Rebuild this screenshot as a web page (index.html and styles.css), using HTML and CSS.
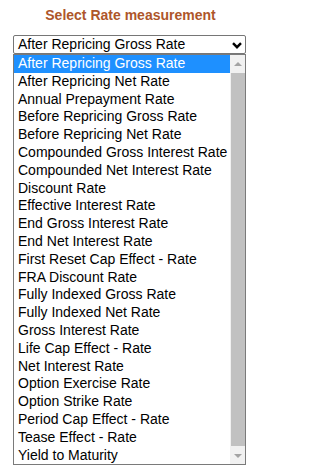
FILE: index.html
```html
<!DOCTYPE html>
<html>
<head>
<meta charset="utf-8">
<link rel="stylesheet" href="styles.css">
</head>
<body>
<div class="page">
<div class="title">Select Rate measurement</div>
<div class="picker">
  <div class="select">
    <span class="select-value">After Repricing Gross Rate</span>
    <svg class="chevron" width="10" height="7" viewBox="0 0 10 7"><path d="M1 1.2 L5 5.2 L9 1.2" fill="none" stroke="#000" stroke-width="2.4"/></svg>
  </div>
  <div class="listbox">
    <ul class="options">
      <li class="option selected">After Repricing Gross Rate</li>
      <li class="option">After Repricing Net Rate</li>
      <li class="option">Annual Prepayment Rate</li>
      <li class="option">Before Repricing Gross Rate</li>
      <li class="option">Before Repricing Net Rate</li>
      <li class="option">Compounded Gross Interest Rate</li>
      <li class="option">Compounded Net Interest Rate</li>
      <li class="option">Discount Rate</li>
      <li class="option">Effective Interest Rate</li>
      <li class="option">End Gross Interest Rate</li>
      <li class="option">End Net Interest Rate</li>
      <li class="option">First Reset Cap Effect - Rate</li>
      <li class="option">FRA Discount Rate</li>
      <li class="option">Fully Indexed Gross Rate</li>
      <li class="option">Fully Indexed Net Rate</li>
      <li class="option">Gross Interest Rate</li>
      <li class="option">Life Cap Effect - Rate</li>
      <li class="option">Net Interest Rate</li>
      <li class="option">Option Exercise Rate</li>
      <li class="option">Option Strike Rate</li>
      <li class="option">Period Cap Effect - Rate</li>
      <li class="option">Tease Effect - Rate</li>
      <li class="option">Yield to Maturity</li>
    </ul>
    <div class="scrollbar">
      <div class="sb-btn"><span class="arrow-up"></span></div>
      <div class="sb-thumb"></div>
      <div class="sb-btn"><span class="arrow-down"></span></div>
    </div>
  </div>
</div>
</div>
</body>
</html>
```
FILE: styles.css
```css
html, body {
  margin: 0;
  padding: 0;
  background: #fff;
}
body {
  font-family: "Liberation Sans", Arial, sans-serif;
  color: #000;
}
.page {
  width: 261px;
}
.title {
  padding-top: 7px;
  font-size: 14px;
  line-height: 16px;
  font-weight: bold;
  text-align: center;
  color: #ae562a;
}
.picker {
  margin: 12px 0 0 13px;
  width: 233px;
}
.select {
  box-sizing: border-box;
  height: 19px;
  border: 1px solid #767676;
  border-radius: 2px;
  display: flex;
  align-items: center;
  justify-content: space-between;
  padding: 0 3px 0 4px;
  font-size: 14px;
  line-height: 17px;
  background: #fff;
}
.chevron {
  display: block;
  margin-top: 1px;
}
.listbox {
  box-sizing: border-box;
  border: 1px solid #7a7a7a;
  display: flex;
  background: #fff;
}
.options {
  list-style: none;
  margin: 0;
  padding: 0;
  flex: 1;
}
.option {
  font-size: 14px;
  line-height: 17.8px;
  height: 17.8px;
  padding-left: 4px;
  white-space: nowrap;
}
.option.selected {
  background: #1e90ff;
  color: #fff;
}
.scrollbar {
  width: 15px;
  background: #f1f1f1;
  display: flex;
  flex-direction: column;
}
.sb-btn {
  height: 17px;
  display: flex;
  align-items: center;
  justify-content: center;
}
.arrow-up, .arrow-down {
  width: 0;
  height: 0;
  border-left: 4px solid transparent;
  border-right: 4px solid transparent;
}
.arrow-up {
  border-bottom: 4px solid #a3a3a3;
}
.arrow-down {
  border-top: 4px solid #a3a3a3;
}
.sb-thumb {
  flex: 1;
  margin: 1px 0 1px 1px;
  background: #c1c1c1;
}
```
